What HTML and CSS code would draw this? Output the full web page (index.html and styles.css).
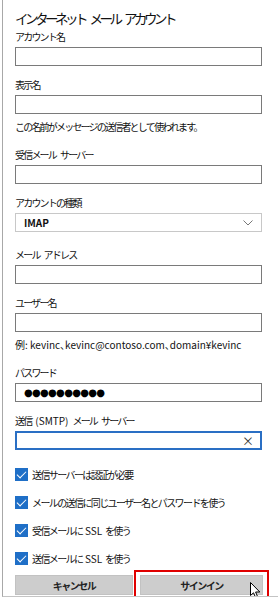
FILE: index.html
```html
<!DOCTYPE html>
<html lang="ja">

<head>
    <meta charset="utf-8">
    <title>インターネット メール アカウント</title>
    <link rel="stylesheet" href="styles.css">
</head>

<body>
    <div class="panel">
        <h1 class="title">インターネット メール アカウント</h1>

        <div class="fields">
            <div class="field">
                <div class="label">アカウント名</div>
                <div class="box"></div>
            </div>

            <div class="field">
                <div class="label">表示名</div>
                <div class="box"></div>
                <div class="hint">この名前がメッセージの送信者として使われます。</div>
            </div>

            <div class="field">
                <div class="label">受信メール サーバー</div>
                <div class="box"></div>
            </div>

            <div class="field field-select">
                <div class="label">アカウントの種類</div>
                <div class="box select">
                    <span class="select-value">IMAP</span>
                    <svg class="chevron" width="10" height="6" viewBox="0 0 10 6">
                        <path d="M0.5 0.5 L5 5 L9.5 0.5" fill="none" stroke="#777" stroke-width="1"/>
                    </svg>
                </div>
            </div>

            <div class="field">
                <div class="label">メール アドレス</div>
                <div class="box"></div>
            </div>

            <div class="field">
                <div class="label">ユーザー名</div>
                <div class="box"></div>
                <div class="hint example">例: kevinc、kevinc@contoso.com、domain¥kevinc</div>
            </div>

            <div class="field">
                <div class="label">パスワード</div>
                <div class="box password">●●●●●●●●●●</div>
            </div>

            <div class="field">
                <div class="label">送信 <span class="latin">(SMTP)</span> メール サーバー</div>
                <div class="box focused">
                    <span class="clear">×</span>
                </div>
            </div>
        </div>

        <div class="checks">
            <label class="check"><span class="tick"></span><span>送信サーバーは認証が必要</span></label>
            <label class="check"><span class="tick"></span><span>メールの送信に同じユーザー名とパスワードを使う</span></label>
            <label class="check"><span class="tick"></span><span>受信メールに <span class="latin">SSL</span> を使う</span></label>
            <label class="check"><span class="tick"></span><span>送信メールに <span class="latin">SSL</span> を使う</span></label>
        </div>

        <div class="actions">
            <button class="btn cancel">キャンセル</button>
            <div class="highlight">
                <button class="btn">サインイン</button>
                <svg class="cursor" width="11" height="17" viewBox="0 0 11 17">
                    <path d="M0.5 0.5 L0.5 13.5 L3.5 10.8 L5.8 16 L7.8 15.1 L5.6 10 L9.8 10 Z" fill="#fff" stroke="#000" stroke-width="1" stroke-linejoin="round"/>
                </svg>
            </div>
        </div>
    </div>
</body>

</html>
```

FILE: styles.css
```css
body {
    margin: 0;
    background-color: #fff;
    font-family: "Noto Sans CJK JP", sans-serif;
    color: #111;
}

.panel {
    margin-left: 2px;
    height: 597px;
    border-left: 1px solid #a8a8a8;
    border-bottom: 1px solid #c4c4c4;
    padding: 8px 16px 0 12px;
    box-sizing: border-box;
    overflow: hidden;
}

.title {
    margin: 0 0 2px 0;
    font-size: 13.5px;
    font-weight: normal;
    line-height: 20px;
    letter-spacing: -3.5px;
    word-spacing: 5px;
}

.fields {
    display: flex;
    flex-direction: column;
    gap: 12px;
}

.label {
    font-size: 10px;
    line-height: 14px;
    margin-bottom: 3px;
    letter-spacing: -1.8px;
    word-spacing: 3.5px;
}

.latin {
    letter-spacing: normal;
}

.box {
    height: 19px;
    border: 1px solid #7a7a7a;
    box-sizing: border-box;
    display: flex;
    align-items: center;
}

.hint {
    font-size: 10px;
    line-height: 14px;
    margin-top: 6px;
    margin-bottom: 2px;
    letter-spacing: -1.8px;
}

.hint.example {
    letter-spacing: normal;
    font-feature-settings: "palt" 1;
}

.field-select {
    margin-bottom: 4px;
}

.select {
    border-color: #c8c8c8;
    padding: 0 8px;
    justify-content: space-between;
}

.select-value {
    font-size: 10px;
    font-weight: bold;
}

.password {
    padding-left: 8px;
    font-family: "DejaVu Sans", sans-serif;
    font-size: 10px;
    letter-spacing: -0.7px;
    color: #000;
}

.focused {
    border: 2px solid #2a6fc4;
    justify-content: flex-end;
    padding-right: 6px;
}

.clear {
    font-size: 12px;
    color: #333;
    line-height: 1;
}

.checks {
    margin-top: 10px;
    display: flex;
    flex-direction: column;
}

.check {
    height: 28px;
    display: flex;
    align-items: center;
    font-size: 10px;
    letter-spacing: -1.6px;
    word-spacing: 2px;
}

.tick {
    width: 13px;
    height: 13px;
    margin-right: 4px;
    background-color: #1f6fc7;
    position: relative;
    flex-shrink: 0;
}

.tick::after {
    content: "";
    position: absolute;
    left: 4px;
    top: 1px;
    width: 4px;
    height: 8px;
    border-right: 1.5px solid #fff;
    border-bottom: 1.5px solid #fff;
    transform: rotate(45deg);
}

.actions {
    margin-top: -2px;
    display: flex;
    align-items: center;
    gap: 1px;
}

.btn {
    height: 20px;
    border: 1px solid #c2c2c2;
    background-color: #cdcdcd;
    font-family: inherit;
    font-size: 10px;
    font-weight: bold;
    letter-spacing: -1.5px;
    color: #222;
    padding: 0;
}

.cancel {
    width: 118px;
    flex-shrink: 0;
}

.highlight {
    position: relative;
    flex-shrink: 0;
    width: 135px;
    box-sizing: border-box;
    border: 2px solid #e00000;
    padding: 3px 4px;
    display: flex;
}

.highlight .btn {
    flex: 1;
}

.cursor {
    position: absolute;
    left: 114px;
    top: 10px;
}
```
